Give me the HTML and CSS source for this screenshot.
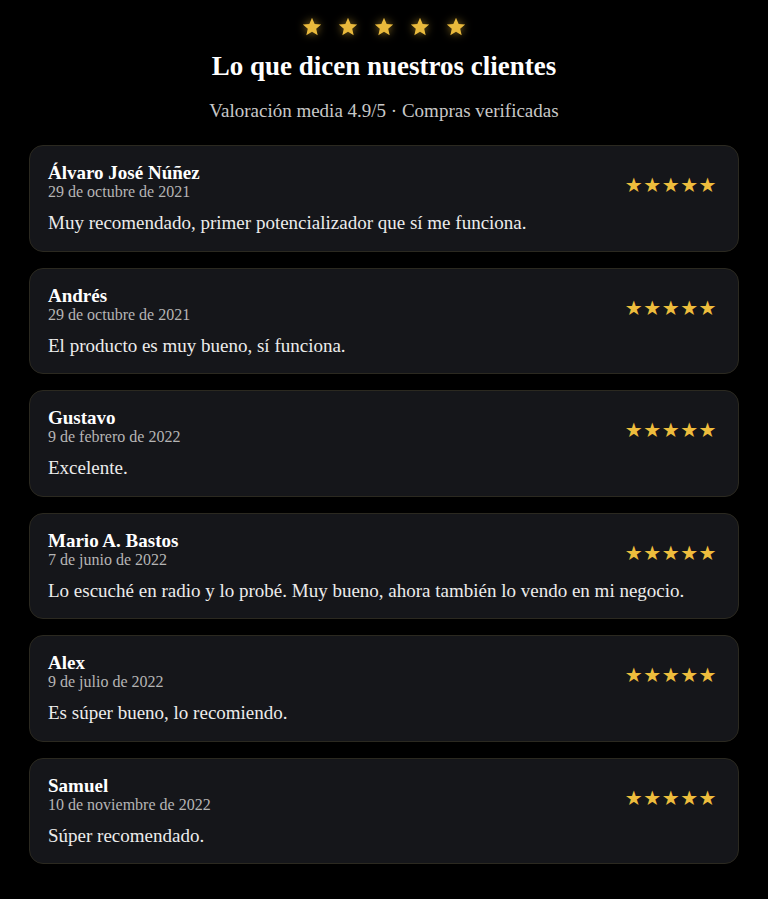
FILE: index.html
```html
<!DOCTYPE html>
<html lang="es">

<head>
    <meta charset="UTF-8" />
    <meta name="viewport" content="width=device-width, initial-scale=1.0" />
    <title>Opiniones</title>
    <link rel="stylesheet" href="styles.css">
</head>

<body>
    <div class="wrap">
        <div class="top-stars">
            <svg viewBox="0 0 24 24"><path d="M12 2l2.9 6.6 7.1.6-5.4 4.7 1.6 7L12 17.2 5.8 20.9l1.6-7L2 9.2l7.1-.6z"/></svg>
            <svg viewBox="0 0 24 24"><path d="M12 2l2.9 6.6 7.1.6-5.4 4.7 1.6 7L12 17.2 5.8 20.9l1.6-7L2 9.2l7.1-.6z"/></svg>
            <svg viewBox="0 0 24 24"><path d="M12 2l2.9 6.6 7.1.6-5.4 4.7 1.6 7L12 17.2 5.8 20.9l1.6-7L2 9.2l7.1-.6z"/></svg>
            <svg viewBox="0 0 24 24"><path d="M12 2l2.9 6.6 7.1.6-5.4 4.7 1.6 7L12 17.2 5.8 20.9l1.6-7L2 9.2l7.1-.6z"/></svg>
            <svg viewBox="0 0 24 24"><path d="M12 2l2.9 6.6 7.1.6-5.4 4.7 1.6 7L12 17.2 5.8 20.9l1.6-7L2 9.2l7.1-.6z"/></svg>
        </div>
        <h1>Lo que dicen nuestros clientes</h1>
        <p class="subtitle">Valoración media 4.9/5 · Compras verificadas</p>

        <div class="review">
            <div class="review-head">
                <div>
                    <div class="name">Álvaro José Núñez</div>
                    <div class="date">29 de octubre de 2021</div>
                </div>
                <div class="stars">★★★★★</div>
            </div>
            <p class="text">Muy recomendado, primer potencializador que sí me funciona.</p>
        </div>

        <div class="review">
            <div class="review-head">
                <div>
                    <div class="name">Andrés</div>
                    <div class="date">29 de octubre de 2021</div>
                </div>
                <div class="stars">★★★★★</div>
            </div>
            <p class="text">El producto es muy bueno, sí funciona.</p>
        </div>

        <div class="review">
            <div class="review-head">
                <div>
                    <div class="name">Gustavo</div>
                    <div class="date">9 de febrero de 2022</div>
                </div>
                <div class="stars">★★★★★</div>
            </div>
            <p class="text">Excelente.</p>
        </div>

        <div class="review">
            <div class="review-head">
                <div>
                    <div class="name">Mario A. Bastos</div>
                    <div class="date">7 de junio de 2022</div>
                </div>
                <div class="stars">★★★★★</div>
            </div>
            <p class="text">Lo escuché en radio y lo probé. Muy bueno, ahora también lo vendo en mi negocio.</p>
        </div>

        <div class="review">
            <div class="review-head">
                <div>
                    <div class="name">Alex</div>
                    <div class="date">9 de julio de 2022</div>
                </div>
                <div class="stars">★★★★★</div>
            </div>
            <p class="text">Es súper bueno, lo recomiendo.</p>
        </div>

        <div class="review">
            <div class="review-head">
                <div>
                    <div class="name">Samuel</div>
                    <div class="date">10 de noviembre de 2022</div>
                </div>
                <div class="stars">★★★★★</div>
            </div>
            <p class="text">Súper recomendado.</p>
        </div>
    </div>
</body>

</html>
```

FILE: styles.css
```css
* {
    box-sizing: border-box;
}

body {
    margin: 0;
    background-color: #000;
    color: #fff;
    font-family: "Liberation Serif", "Times New Roman", serif;
}

.wrap {
    width: 710px;
    margin: 0 auto;
    padding-top: 16px;
}

.top-stars {
    display: flex;
    justify-content: center;
    gap: 14px;
    height: 22px;
}

.top-stars svg {
    width: 22px;
    height: 22px;
    fill: #e9b93c;
    filter: drop-shadow(0 0 4px rgba(233, 185, 60, 0.6));
}

h1 {
    text-align: center;
    font-size: 27px;
    line-height: 30px;
    margin: 13px 0 0;
    font-weight: bold;
}

.subtitle {
    text-align: center;
    font-size: 19px;
    line-height: 22px;
    color: #c8c8c8;
    margin: 19px 0 0;
}

.review {
    background-color: #15161a;
    border: 1px solid #2b2920;
    border-radius: 14px;
    padding: 17px 21px 17.5px 18px;
    margin-top: 16px;
}

.subtitle + .review {
    margin-top: 23px;
}

.review-head {
    display: flex;
    justify-content: space-between;
    align-items: center;
}

.name {
    font-size: 19px;
    line-height: 20px;
    font-weight: bold;
}

.date {
    font-size: 16px;
    line-height: 18px;
    color: #b5b5b5;
}

.stars {
    font-family: "DejaVu Sans", sans-serif;
    font-size: 20px;
    line-height: 22px;
    letter-spacing: 0.5px;
    color: #eebd3d;
    margin-top: 6px;
}

.text {
    font-size: 19px;
    line-height: 20px;
    color: #ececec;
    margin: 12px 0 0;
}
```
